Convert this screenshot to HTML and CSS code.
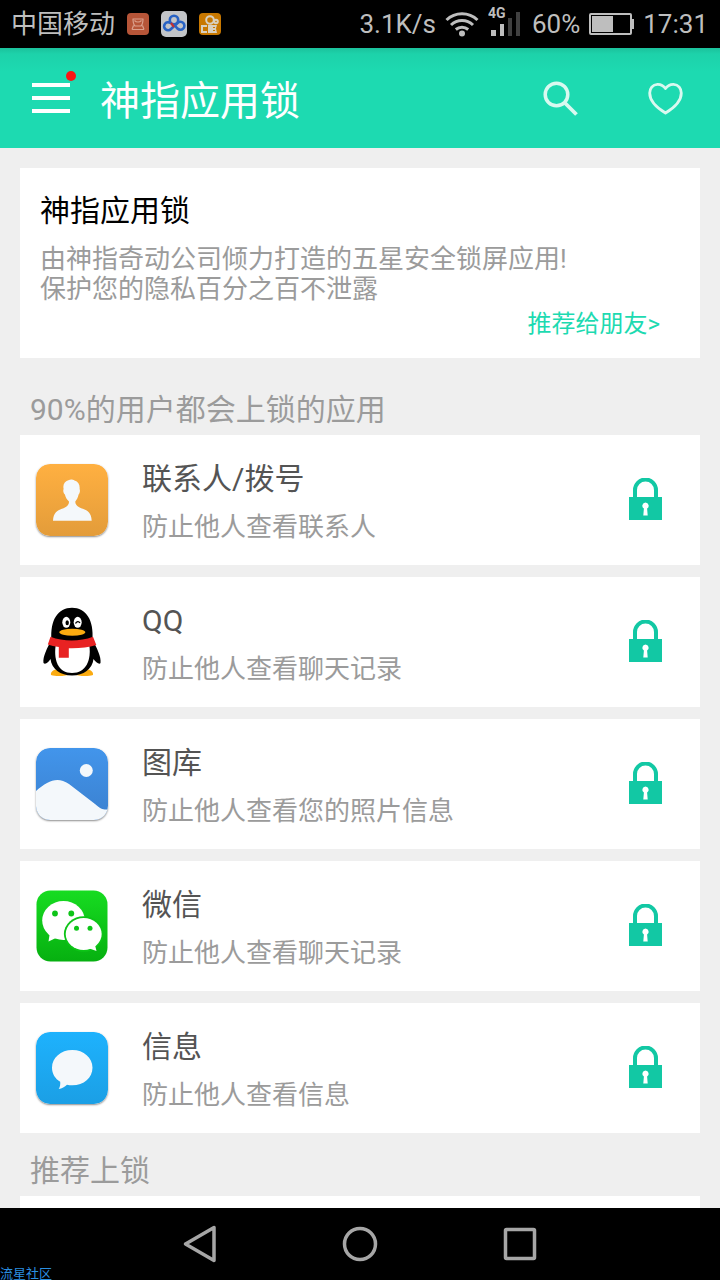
FILE: index.html
```html
<!DOCTYPE html>
<html lang="zh-CN">
<head>
<meta charset="utf-8">
<meta name="viewport" content="width=device-width, initial-scale=1">
<title>神指应用锁</title>
<link rel="stylesheet" href="styles.css">
</head>
<body>
<svg class="defs" width="0" height="0" aria-hidden="true">
  <defs>
    <linearGradient id="orange" x1="0" y1="0" x2="0" y2="1"><stop offset="0" stop-color="#ffb041"/><stop offset="1" stop-color="#e39c3a"/></linearGradient>
    <linearGradient id="blue" x1="0" y1="0" x2="0" y2="1"><stop offset="0" stop-color="#4295eb"/><stop offset="1" stop-color="#3b80cf"/></linearGradient>
    <linearGradient id="green" x1="0" y1="0" x2="0" y2="1"><stop offset="0" stop-color="#17dc21"/><stop offset="1" stop-color="#06b010"/></linearGradient>
    <linearGradient id="sky" x1="0" y1="0" x2="0" y2="1"><stop offset="0" stop-color="#1eb2fd"/><stop offset="1" stop-color="#1b9fe5"/></linearGradient>
    <clipPath id="tile"><rect width="72" height="72" rx="14"/></clipPath>
    <symbol id="lock" viewBox="0 0 34 44">
      <path d="M7 20V12a10.500 10.500 0 0 1 21 0v8" fill="none" stroke="#12c8a4" stroke-width="4"/>
      <path fill="#12c8a4" fill-rule="evenodd" d="M1 19h33v23H1zM17.500 24.500a3.300 3.300 0 0 0-1.600 6.100L15.300 37.500h4.400l-.6-6.900a3.300 3.300 0 0 0-1.600-6.100z"/>
    </symbol>
  </defs>
</svg>

<div class="screen">
  <div class="status">
    <div class="status-left">
      <span>中国移动</span>
      <svg width="22" height="22" viewBox="0 0 22 22"><rect width="22" height="22" rx="4" fill="#b65538"/><g fill="none" stroke="#dba18d" stroke-width="1.200"><path d="M5.500 6h11M6 6c0 3 0 5 2 7h6c2-2 2-4 2-7M5 16.500h12M6.500 12.500L5 16.500M15.500 12.500l1.500 4M7.500 7.500c2 2 5 2 7 0"/></g></svg>
      <svg width="26" height="26" viewBox="0 0 26 26"><rect width="26" height="26" rx="5" fill="#c3c5c8"/><g fill="none" stroke="#2862c4" stroke-width="2.600"><circle cx="13" cy="9" r="4.200"/><path d="M13 13.500l3.500 4a4 4 0 1 0 0-5.500L10 18a4 4 0 1 1-.5-6"/></g><path d="M10 12l3 4" stroke="#c23131" stroke-width="2.200"/></svg>
      <svg width="22" height="22" viewBox="0 0 22 22"><rect width="22" height="22" rx="4" fill="#c87800"/><g fill="none" stroke="#d8d0c0" stroke-width="2"><circle cx="11" cy="7" r="3.800"/><circle cx="17" cy="8.500" r="1.800"/><path d="M8 13H3v6h5"/></g><path fill="#d8d0c0" d="M9 12h9l-1 3.500 1 4.500H9z"/><path fill="#c87800" d="M14 14h2v1h-2zM14 17h2v1h-2z"/></svg>
    </div>
    <div class="status-right">
      <span>3.1K/s</span>
      <svg width="34" height="26" viewBox="0 0 34 26"><g fill="none" stroke="#bebebe" stroke-width="3"><path d="M1.500 9a22.500 22.500 0 0 1 31 0M6 14a16 16 0 0 1 22 0M10.800 18.500a9.500 9.500 0 0 1 12.400 0"/></g><circle cx="17" cy="22.500" r="3" fill="#bebebe"/></svg>
      <svg width="35" height="36" viewBox="0 0 35 36"><text class="net" x="0" y="12">4G</text><path fill="#bebebe" d="M3 24h5v6H3zM12 18h4v12h-4z"/><path fill="#404040" d="M20 12h4v18h-4zM28 6h4v24h-4z"/></svg>
      <span>60%</span>
      <svg width="45" height="22" viewBox="0 0 45 22"><rect x="1" y="1" width="41" height="20" rx="1" fill="none" stroke="#bebebe" stroke-width="2"/><path fill="#bebebe" d="M3 3h21v16H3zM42 6h3v10h-3z"/></svg>
      <span>17:31</span>
    </div>
  </div>

  <header class="bar">
    <button class="icon-btn menu" aria-label="菜单">
      <svg width="38" height="32" viewBox="0 0 38 32"><path fill="#fff" d="M0 1h38v4H0zM0 14h38v4H0zM0 27h38v4H0z"/></svg>
      <span class="badge"></span>
    </button>
    <h1>神指应用锁</h1>
    <button class="icon-btn" aria-label="搜索">
      <svg width="36" height="36" viewBox="0 0 36 36" fill="none" stroke="#d9f9f0"><circle cx="13.500" cy="14.500" r="11.300" stroke-width="3.500"/><path d="M21.500 22.500l12 12" stroke-width="3.800"/></svg>
    </button>
    <button class="icon-btn" aria-label="收藏">
      <svg width="36" height="36" viewBox="0 -1 36 36" fill="none" stroke="#d9f9f0" stroke-width="2.800" stroke-linejoin="round"><path d="M17.500 7.500C15 4 12 3.200 9.500 3.300 4.500 3.500 1.700 7.500 1.700 12c0 9 8.300 15.500 15.800 20C25 27.500 33.300 21 33.300 12c0-4.500-2.800-8.500-7.800-8.700-2.500-.1-5.500.7-8 4.200z"/></svg>
    </button>
  </header>

  <main class="content">
    <section class="promo">
      <h2>神指应用锁</h2>
      <p>由神指奇动公司倾力打造的五星安全锁屏应用!<br>保护您的隐私百分之百不泄露</p>
      <a href="#share">推荐给朋友&gt;</a>
    </section>

    <h2 class="section-title">90%的用户都会上锁的应用</h2>
    <ul class="apps">
      <li class="app">
        <svg class="tile" viewBox="0 0 72 72"><rect width="72" height="72" rx="14" fill="url(#orange)"/><path fill="#f4f8fb" d="M33 16c1.500-1 4-.5 5.500.5 4 1.200 5.500 4.500 5.100 8.500.7 1.500.3 4-1 5.500-.6 3-1.800 5-3.300 7 0 4 3 5.500 7.500 7.300 5 2 8.500 4 8.900 12H17c.4-8 4-10 9-12 4.500-1.800 7-3.300 7-7.300-2-2-3.500-4-4.100-7-1.600-1.500-2-4-1.300-5.500-1-4.500 1-8 5.400-9z"/></svg>
        <div class="info"><h3>联系人/拨号</h3><p>防止他人查看联系人</p></div>
        <button class="icon-btn" aria-label="解锁联系人/拨号"><svg class="lock"><use href="#lock"/></svg></button>
      </li>
      <li class="app">
        <svg class="tile flat" viewBox="0 0 72 72">
          <path fill="#fbab10" d="M15 69c-1-4 5-7 12-6h18c7-1 13 2 12 6-5 1.500-13 1.500-21-1-8 2.500-16 2.500-21 1z"/>
          <path d="M15.500 34C14 14 22 1.700 36 1.700S58 14 56.500 34c4 7 9 17 8 23-1 2-5-1-7-4-1 10-10 16.500-21.500 16.500S15.500 63 14.500 53c-2 3-5 6-7 4-1-6 4-16 8-23z"/>
          <path fill="#fff" d="M20 37c-3 17 2 30 16 30s20-13 17-30z"/>
          <path fill="#e82222" d="M14.500 30.700c13 5 29 5 42.500 0l3.300 8.300c-8 2.500-18 3.500-27.500 3.200v9.500h-10V41c-4-.5-8-1.200-11-2.500z"/>
          <g fill="#fff"><ellipse cx="30.300" cy="16.300" rx="4" ry="5.500"/><ellipse cx="41.700" cy="16.300" rx="4" ry="5.500"/></g>
          <ellipse cx="31.200" cy="16.800" rx="1.700" ry="2.500"/><path d="M39.500 17.500c1-2.500 3.500-2.500 4.500-.5" fill="none" stroke="#000" stroke-width="1.300"/>
          <ellipse cx="36.300" cy="26.300" rx="13" ry="3.500" fill="#fbab10"/>
        </svg>
        <div class="info"><h3>QQ</h3><p>防止他人查看聊天记录</p></div>
        <button class="icon-btn" aria-label="解锁QQ"><svg class="lock"><use href="#lock"/></svg></button>
      </li>
      <li class="app">
        <svg class="tile" viewBox="0 0 72 72"><g clip-path="url(#tile)"><path fill="url(#blue)" d="M0 0h72v72H0z"/><circle cx="50.300" cy="22.500" r="6.500" fill="#f4f8fb"/><path fill="#f4f8fb" d="M0 43C12 33 21 28 33 36l26 20c6 5 8 6 13 5.500V72H0z"/></g></svg>
        <div class="info"><h3>图库</h3><p>防止他人查看您的照片信息</p></div>
        <button class="icon-btn" aria-label="解锁图库"><svg class="lock"><use href="#lock"/></svg></button>
      </li>
      <li class="app">
        <svg class="tile flat" viewBox="0 0 72 72"><rect x=".5" y=".5" width="71" height="71" rx="14" fill="url(#green)"/>
          <g fill="#fff"><ellipse cx="27.500" cy="30.500" rx="21.300" ry="19.500"/><path d="M14 42l-1.500 9.500L22 47z"/></g>
          <ellipse cx="47.700" cy="44" rx="19.800" ry="17.800" fill="#0dc417"/>
          <g fill="#fff"><ellipse cx="47.700" cy="44" rx="18" ry="16"/><path d="M52 58l8.500 3-2-8z"/></g>
          <g fill="#0dc417"><circle cx="19" cy="23.500" r="2.900"/><circle cx="35.300" cy="23.500" r="2.900"/><circle cx="40.500" cy="38.200" r="2.500"/><circle cx="54" cy="38.200" r="2.500"/></g></svg>
        <div class="info"><h3>微信</h3><p>防止他人查看聊天记录</p></div>
        <button class="icon-btn" aria-label="解锁微信"><svg class="lock"><use href="#lock"/></svg></button>
      </li>
      <li class="app">
        <svg class="tile" viewBox="0 0 72 72"><rect width="72" height="72" rx="14" fill="url(#sky)"/><path fill="#f4f8fb" d="M36.300 18c11.500 0 20.200 7.800 20.200 17.700S47.800 53.300 36.300 53.300c-2 0-3.700-.2-5.300-.6-2.300 2-5 3.800-8.300 4.300 1.300-2 1.800-4.500 1.500-7.300-5-3-8.200-8-8.200-14C16 25.800 24.800 18 36.300 18z"/></svg>
        <div class="info"><h3>信息</h3><p>防止他人查看信息</p></div>
        <button class="icon-btn" aria-label="解锁信息"><svg class="lock"><use href="#lock"/></svg></button>
      </li>
    </ul>

    <h2 class="section-title">推荐上锁</h2>
    <ul class="apps"><li class="app"></li></ul>
  </main>

  <nav class="nav">
    <button class="icon-btn" aria-label="返回"><svg width="40" height="40" viewBox="0 0 40 40"><path d="M34 3.500v33L5.500 20z" fill="none" stroke="#a6a6a6" stroke-width="3.500" stroke-linejoin="round"/></svg></button>
    <button class="icon-btn" aria-label="主页"><svg width="40" height="40" viewBox="0 0 40 40"><circle cx="20" cy="20" r="15.500" fill="none" stroke="#a6a6a6" stroke-width="3.500"/></svg></button>
    <button class="icon-btn" aria-label="最近任务"><svg width="40" height="40" viewBox="0 0 40 40"><rect x="5.500" y="5.500" width="29" height="29" rx="1" fill="none" stroke="#a6a6a6" stroke-width="3.500"/></svg></button>
    <span class="watermark">流星社区</span>
  </nav>
</div>
</body>
</html>
```

FILE: styles.css
```css
* {
  box-sizing: border-box;
}

body,
h1,
h2,
h3,
p,
ul {
  margin: 0;
  padding: 0;
  font-weight: 400;
}

body {
  font-family: Roboto, "Noto Sans CJK SC", sans-serif;
  background: #000;
}

svg {
  display: block;
  flex: none;
}

.defs {
  position: absolute;
}

.screen {
  display: flex;
  flex-direction: column;
  height: 100vh;
}

.status {
  display: flex;
  justify-content: space-between;
  height: 48px;
  padding: 0 12px 0 11px;
  flex: none;
  background: #000;
  color: #bebebe;
  font-size: 26px;
  line-height: 50px;
  white-space: nowrap;
}

.status-left,
.status-right {
  display: flex;
  align-items: center;
  gap: 12px;
}

.status-right {
  gap: 9px;
}

.net {
  font-size: 14px;
  font-weight: 700;
  fill: #bebebe;
}

.icon-btn {
  position: relative;
  flex: none;
  padding: 0;
  border: 0;
  background: none;
  cursor: pointer;
}

.bar {
  display: flex;
  align-items: center;
  gap: 69px;
  height: 100px;
  padding: 0 36px 0 32px;
  flex: none;
  background: linear-gradient(#1bc29c, #1dd2aa 6px, #1ddab1 24px);
  color: #fff;
}

.bar h1 {
  flex: 1;
  margin-left: -39px;
  padding-top: 8px;
  font-size: 40px;
  line-height: 60px;
}

.badge {
  position: absolute;
  top: -11px;
  right: -6px;
  width: 10px;
  height: 10px;
  border-radius: 50%;
  background: #fb1414;
}

.content {
  flex: 1;
  min-height: 0;
  overflow: hidden;
  padding: 20px 20px 0;
  background: #efefef;
}

.promo {
  display: flex;
  flex-direction: column;
  margin-bottom: 14px;
  padding: 23px 20px 14px;
  background: #fff;
}

.promo h2 {
  color: #000;
  font-size: 30px;
  line-height: 40px;
}

.promo p {
  margin: 13px 0 0;
  color: #9b9b9b;
  font-size: 26px;
  line-height: 30px;
}

.promo a {
  align-self: flex-end;
  margin-right: 20px;
  color: #1ddab1;
  font-size: 24px;
  line-height: 40px;
  text-decoration: none;
}

.section-title {
  padding: 18px 10px 5px;
  color: #9b9b9b;
  font-size: 30px;
  line-height: 40px;
}

.apps {
  display: flex;
  flex-direction: column;
  gap: 12px;
  list-style: none;
}

.app {
  display: flex;
  align-items: center;
  gap: 34px;
  min-height: 130px;
  padding: 0 38px 0 16px;
  background: #fff;
}

.tile {
  width: 72px;
  height: 72px;
  border-radius: 14px;
  box-shadow: 0 1px 2px rgba(0, 0, 0, 0.45);
}

.flat {
  border-radius: 0;
  box-shadow: none;
}

.info {
  flex: 1;
  min-width: 0;
  padding-top: 6px;
}

.info h3 {
  color: #545454;
  font-size: 30px;
  line-height: 40px;
}

.info p {
  margin-top: 8px;
  color: #9b9b9b;
  font-size: 26px;
  line-height: 40px;
}

.lock {
  width: 34px;
  height: 44px;
}

.nav {
  position: relative;
  display: flex;
  align-items: center;
  justify-content: center;
  gap: 120px;
  height: 72px;
  flex: none;
  background: #000;
}

.watermark {
  position: absolute;
  left: 0;
  bottom: 0;
  color: #2b8fe0;
  font-size: 13px;
  line-height: 13px;
}
```
